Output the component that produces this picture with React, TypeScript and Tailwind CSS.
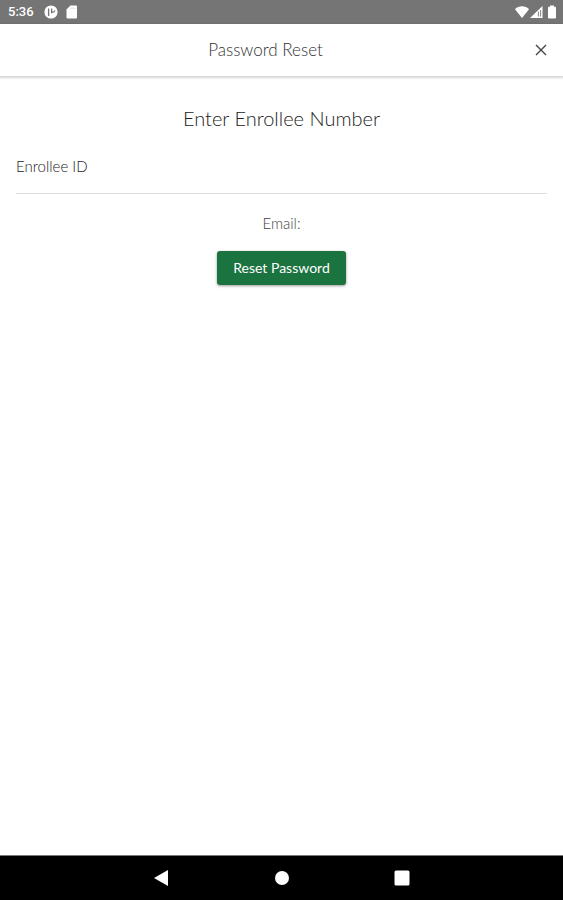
import type { ReactNode } from "react";

function StatusBar() {
  return (
    <div className="flex h-6 items-center bg-[#757575] pr-1.5 pl-2 text-white">
      <span className="font-[Roboto,sans-serif] text-[13px] font-medium">5:36</span>
      <svg viewBox="0 0 14 14" className="ml-2.5 size-3.5" aria-hidden="true">
        <circle cx="7" cy="7" r="6.6" fill="currentColor" />
        <path
          d="M4.6 3.4v7.6M7.6 3.4v4.8M7.6 7.2H9a1.7 1.7 0 0 0 1.6-1.8"
          fill="none"
          stroke="#757575"
          strokeWidth="1.3"
        />
      </svg>
      <svg viewBox="0 0 12 14" className="ml-2 h-3.5 w-3" aria-hidden="true">
        <path
          d="M4.5 0.5H10a1 1 0 0 1 1 1v11a1 1 0 0 1-1 1H1.5a1 1 0 0 1-1-1V4.5z"
          fill="currentColor"
        />
        <path d="M5 2.5v1.6M7 2.5v1.6M9 2.5v1.6" stroke="#cccccc" strokeWidth="0.8" />
      </svg>
      <div className="ml-auto flex items-center">
        <svg viewBox="0 0 14 12" className="h-3 w-3.5" aria-hidden="true">
          <path d="M7 12 0 3.2C4-.6 10-.6 14 3.2z" fill="currentColor" />
        </svg>
        <svg viewBox="0 0 14 12" className="h-3 w-3.5" aria-hidden="true">
          <path d="M13.5 0v12H1z" fill="currentColor" />
          <path d="M9.4 5.5v5M11.6 4v6.5" stroke="#757575" strokeWidth="0.9" />
        </svg>
        <svg viewBox="0 0 10 14" className="ml-1 h-3.5 w-2.5" aria-hidden="true">
          <path
            d="M3 0.5h4v1.2h1a1 1 0 0 1 1 1V12.5a1 1 0 0 1-1 1H2a1 1 0 0 1-1-1V2.7a1 1 0 0 1 1-1h1z"
            fill="currentColor"
          />
        </svg>
      </div>
    </div>
  );
}

function NavButton({ label, children }: { label: string; children: ReactNode }) {
  return (
    <button type="button" aria-label={label} className="flex size-10 items-center justify-center">
      <svg viewBox="0 0 16 16" className="size-4" fill="currentColor" aria-hidden="true">
        {children}
      </svg>
    </button>
  );
}

export default function App() {
  return (
    <div className="flex min-h-screen flex-col bg-white font-[Lato,sans-serif] font-light text-[#222222]">
      <StatusBar />

      <header className="flex h-13 items-center pr-3 shadow-[0_1px_2px_1px_rgba(0,0,0,0.16)]">
        <h1 className="grow text-center text-[17px] text-[#333333]">Password Reset</h1>
        <button type="button" aria-label="Close" className="flex size-5 items-center justify-center">
          <svg viewBox="0 0 12 12" className="size-3" aria-hidden="true">
            <path d="M1 1l10 10M11 1 1 11" stroke="#444444" strokeWidth="1.4" />
          </svg>
        </button>
      </header>

      <main className="flex grow flex-col items-center px-4 pt-7">
        <h2 className="text-xl">Enter Enrollee Number</h2>
        <form className="flex w-full flex-col items-center">
          <div className="mt-2 flex h-[54px] w-full items-center border-b border-[#dedede]">
            <label htmlFor="enrollee-id" className="text-[15px]">
              Enrollee ID
            </label>
            <input id="enrollee-id" type="text" className="ml-4 min-w-0 grow outline-none" />
          </div>
          <p className="mt-[18px] text-[15px] text-[#444444]">Email:</p>
          <button
            type="submit"
            className="mt-4 h-[34px] rounded-[3px] bg-[#1b7340] px-4 text-sm font-normal text-white shadow-[0_1px_3px_rgba(0,0,0,0.4)]"
          >
            Reset Password
          </button>
        </form>
      </main>

      <nav className="flex h-[45px] items-center justify-center gap-20 border-t border-[#777777] bg-black text-white">
        <NavButton label="Back">
          <path d="M14 0v16L0 8z" />
        </NavButton>
        <NavButton label="Home">
          <circle cx="8" cy="8" r="7" />
        </NavButton>
        <NavButton label="Recent apps">
          <rect x="0.5" y="0.5" width="15" height="15" rx="1.5" />
        </NavButton>
      </nav>
    </div>
  );
}
